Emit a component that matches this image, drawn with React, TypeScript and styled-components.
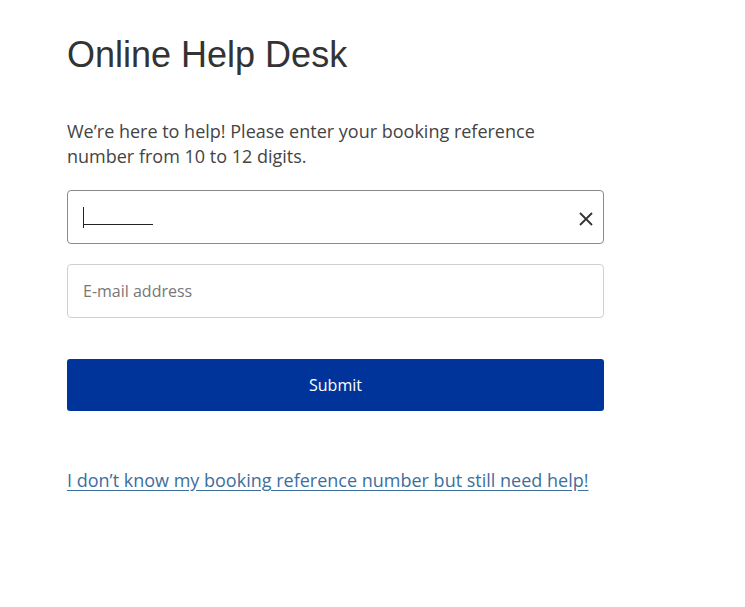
import React from "react";
import styled, { createGlobalStyle } from "styled-components";

const Global = createGlobalStyle`
  html, body { margin: 0; padding: 0; background: #fff; }
  body { font-family: "Open Sans", "Liberation Sans", sans-serif; }
`;

const Page = styled.main`
  width: 537px;
  padding: 33px 0 0 67px;
  display: flex;
  flex-direction: column;
`;

const Title = styled.h1`
  margin: 0;
  font-family: "Liberation Sans", Arial, sans-serif;
  font-weight: 400;
  font-size: 36px;
  line-height: 44px;
  color: #333;
`;

const Intro = styled.p`
  margin: 42px 0 0;
  font-size: 18px;
  line-height: 25px;
  color: #444;
  width: 490px;
`;

const Field = styled.div<{ $active?: boolean }>`
  position: relative;
  height: 54px;
  box-sizing: border-box;
  border: 1px solid ${(p) => (p.$active ? "#8a8a8a" : "#d0d0d0")};
  border-radius: 4px;
  display: flex;
  align-items: center;
  padding: 0 15px;
  margin-top: ${(p) => (p.$active ? "21px" : "20px")};
`;

const Input = styled.input`
  flex: 1;
  border: none;
  outline: none;
  font-family: "Open Sans", sans-serif;
  font-size: 16px;
  color: #333;
  background: transparent;
  padding: 0;
  &::placeholder { color: #777; }
`;

const Underline = styled.span`
  position: absolute;
  left: 15px;
  top: 33px;
  width: 70px;
  height: 1px;
  background: #222;
  pointer-events: none;
`;

const Caret = styled.span`
  position: absolute;
  left: 15px;
  top: 16px;
  width: 1px;
  height: 21px;
  background: #222;
  pointer-events: none;
`;

const Clear = styled.button`
  border: none;
  background: none;
  padding: 0;
  width: 20px;
  height: 20px;
  display: flex;
  align-items: center;
  justify-content: center;
  cursor: pointer;
  margin-right: -8px;
  margin-top: 3px;
`;

const Submit = styled.button`
  margin-top: 41px;
  height: 52px;
  border: none;
  border-radius: 3px;
  background: #00349a;
  color: #fff;
  font-family: "Open Sans", sans-serif;
  font-size: 16px;
  cursor: pointer;
`;

const HelpLink = styled.a`
  margin-top: 57px;
  font-size: 18px;
  line-height: 24px;
  color: #3d6f9c;
  text-decoration: underline;
  text-underline-offset: 3px;
`;

export default function App() {
  return (
    <>
      <Global />
      <Page>
        <Title>Online Help Desk</Title>
        <Intro>We’re here to help! Please enter your booking reference number from 10 to 12 digits.</Intro>
        <Field $active>
          <Input aria-label="Booking reference" />
          <Underline />
          <Caret />
          <Clear aria-label="Clear">
            <svg width="14" height="14" viewBox="0 0 14 14">
              <path d="M1 1L13 13M13 1L1 13" stroke="#333" strokeWidth="1.8" />
            </svg>
          </Clear>
        </Field>
        <Field>
          <Input placeholder="E-mail address" />
        </Field>
        <Submit>Submit</Submit>
        <HelpLink href="#">I don’t know my booking reference number but still need help!</HelpLink>
      </Page>
    </>
  );
}
